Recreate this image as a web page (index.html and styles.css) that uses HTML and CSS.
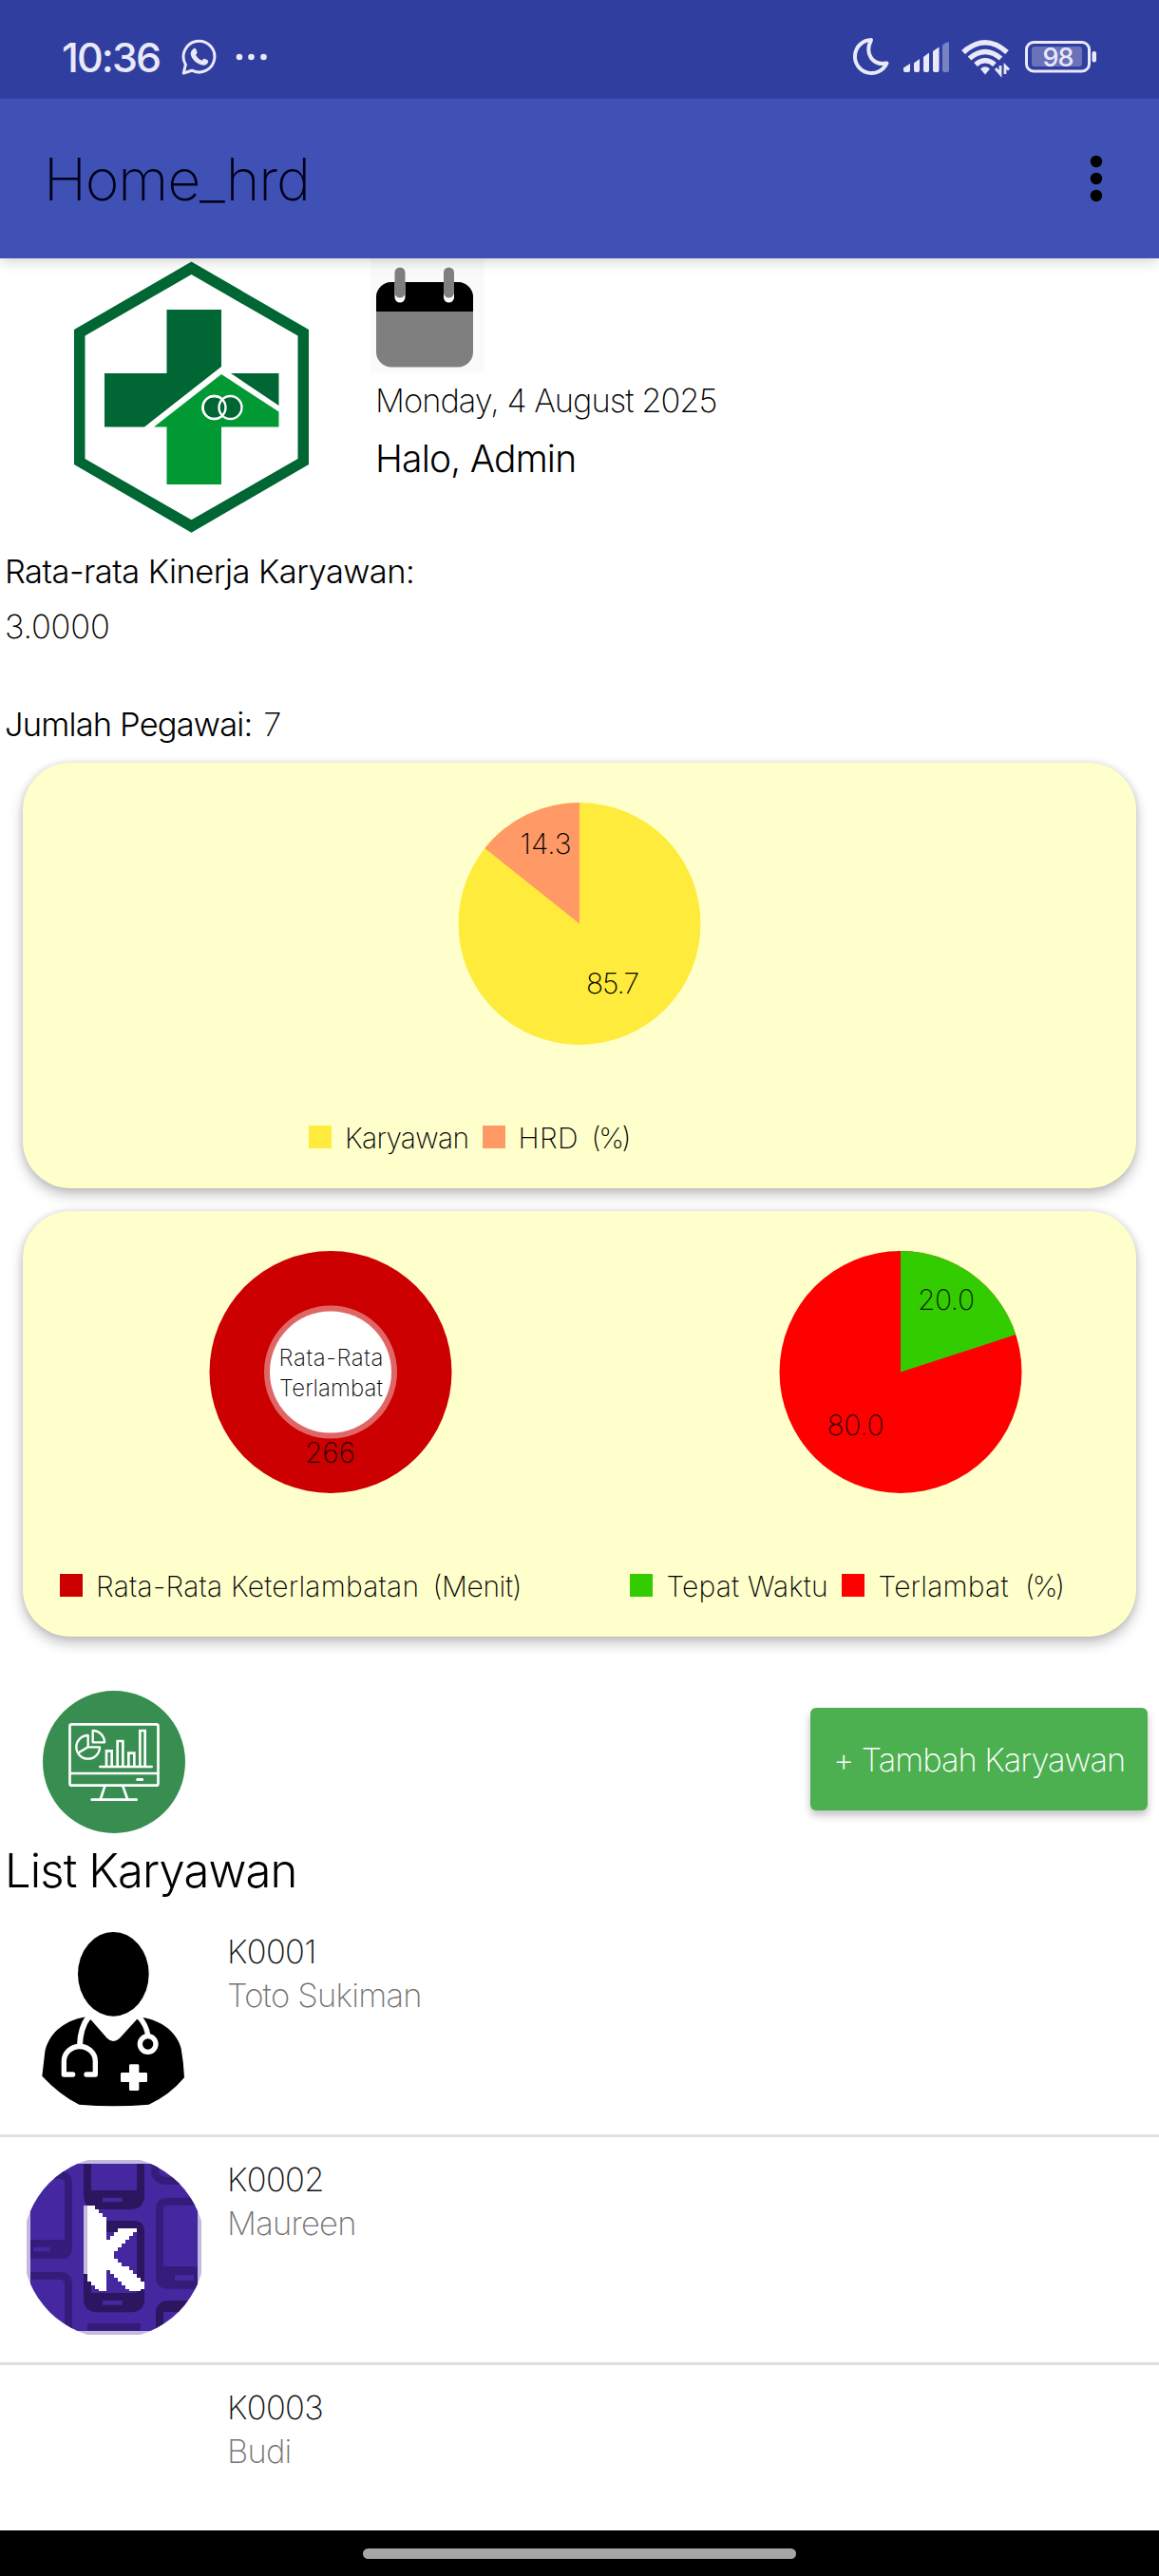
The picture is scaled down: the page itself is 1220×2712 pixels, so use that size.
FILE: index.html
```html
<!DOCTYPE html>
<html lang="id">
<head>
<meta charset="utf-8">
<title>Home_hrd</title>
<link rel="stylesheet" href="styles.css">
</head>
<body>
<div class="screen">
  <header class="status-bar">
    <div class="status-left">
      <span class="clock">10:36</span>
      <svg class="whatsapp" viewBox="0 0 38 38" fill="none">
        <path d="M2.2 36 L4.4 27 A16.4 16.4 0 1 1 11 33.2 Z" stroke="#e9e9fa" stroke-width="3" stroke-linejoin="round"/>
        <path d="M12.4 10.4c1.6-1.4 2.6-.6 3.2 1l.9 2.400c.3 1-.1 1.600-1.400 2.900 1.500 3 3.600 4.800 6.700 6.100 1.400-1.700 2-2.200 3-1.800l2.600 1.300c1 .5 1 1.500.3 2.900-1.300 2.300-3.900 3-6.800 2-5.600-1.700-10-6-11.100-10.800-.5-2.300.8-4.500 2.600-6z" fill="#e9e9fa"/>
      </svg>
      <svg class="more" viewBox="0 0 34 8" fill="#e9e9fa"><circle cx="4" cy="4" r="3.300"/><circle cx="16.500" cy="4" r="3.300"/><circle cx="29.500" cy="4" r="3.300"/></svg>
    </div>
    <svg class="status-right" viewBox="896 36 262 48" fill="none">
      <path d="M917 42 A17.500 17.500 0 1 0 933.500 66.500 C919 69.500 909.500 57 917 42 Z" stroke="#e9e9fa" stroke-width="4" stroke-linejoin="round"/>
      <g fill="#e9e9fa">
        <path d="M951 71.500 L958 67 V74 q0 2-2 2 h-3 q-2 0-2-2z"/>
        <path d="M962 66.500 L968 62 V74 q0 2-2 2 h-2 q-2 0-2-2z"/>
        <path d="M972 60 L978 55.500 V74 q0 2-2 2 h-2 q-2 0-2-2z"/>
        <path d="M982 54 L988.500 49.500 V74 q0 2-2 2 h-2.500 q-2 0-2-2z"/>
        <path opacity=".4" d="M992 48 Q995 44 999 44.500 V74 q0 2-2 2 h-3 q-2 0-2-2z"/>
        <path d="M1037 78.500 l-5-6 q5-4.500 10 0z"/>
      </g>
      <g stroke="#e9e9fa" stroke-width="5.500">
        <path d="M1014 55 Q1037 34.500 1060 55"/>
        <path d="M1020.500 61.500 Q1037 47.500 1053.500 61.500"/>
        <path d="M1027 68 Q1037 59.500 1047 68"/>
      </g>
      <path d="M1053 69v9l-5-6M1058 78v-8.500l4 4" stroke="#e9e9fa" stroke-width="2.800"/>
      <rect x="1080.500" y="44.500" width="66" height="30.500" rx="7.500" stroke="#e9e9fa" stroke-width="3"/>
      <rect x="1086" y="49" width="53" height="21" rx="3" fill="#6a72b9"/>
      <rect x="1149.500" y="54" width="4.500" height="11.500" rx="2" fill="#e9e9fa"/>
      <text x="1113.500" y="69.700" class="battery-level">98</text>
    </svg>
  </header>

  <div class="app-bar">
    <h1 class="app-title">Home_hrd</h1>
    <svg class="overflow" viewBox="0 0 14 50"><circle cx="7" cy="7" r="6.200"/><circle cx="7" cy="25" r="6.200"/><circle cx="7" cy="43" r="6.200"/></svg>
  </div>

  <main class="content">
    <section class="hero">
      <svg class="logo" viewBox="76 274 252 288">
        <path fill="#006633" fill-rule="evenodd" d="M201.500 275.500L325 347V489L201.500 560.700L78 489V347ZM201.500 289L89.500 353.500V483L201.500 547.300L313.500 483V353.500Z"/>
        <path fill="#006633" d="M175.500 326H233V386L152 449.500H110V393H175.500ZM243 393H293.500V427Z"/>
        <path fill="#009933" d="M233 394L293.500 433.500V449.500H233V510H175.500V449.500H162Z"/>
        <g fill="#006633" stroke="#fff" stroke-width="2.400"><circle cx="225.500" cy="429" r="12"/><circle cx="242.500" cy="429" r="12"/><circle cx="225.500" cy="429" r="12" fill="none"/></g>
      </svg>
      <div class="greeting">
        <svg class="calendar" viewBox="390 272 120 120">
          <path fill="#fafafa" d="M390 272h120v120h-120z"/>
          <rect x="396" y="297" width="102" height="89.500" rx="16" fill="#7f7f7f"/>
          <path d="M396 328V313a16 16 0 0 1 16-16h70a16 16 0 0 1 16 16v15z"/>
          <path d="M421 299v14M472.500 299v14" stroke="#fff" stroke-width="11" stroke-linecap="round"/>
          <path d="M421 287v21M472.500 287v21" stroke="#7f7f7f" stroke-width="11" stroke-linecap="round"/>
        </svg>
        <p class="date">Monday, 4 August 2025</p>
        <p class="hello">Halo, Admin</p>
      </div>
    </section>

    <section class="stats">
      <p class="stat-label">Rata-rata Kinerja Karyawan:</p>
      <p class="stat-value">3.0000</p>
      <p class="stat-row"><span class="stat-label employees">Jumlah Pegawai:</span><span class="stat-value">7</span></p>
    </section>

    <section class="card">
      <svg class="chart wide" viewBox="24 803 1172 448">
        <circle cx="610" cy="972.500" r="127.500" fill="#ffeb3b"/>
        <path fill="#ff9966" d="M610 972.500V845A127.500 127.500 0 0 0 510.300 893Z"/>
        <text x="547.500" y="899" textLength="54">14.3</text>
        <text x="617" y="1046" textLength="56">85.7</text>
        <path fill="#ffeb3b" d="M325 1185h24v24h-24z"/>
        <text x="363" y="1208.500" textLength="131">Karyawan</text>
        <path fill="#ff9966" d="M508 1185h24v24h-24z"/>
        <text x="545.500" y="1208.500" textLength="63">HRD</text>
        <text x="622.500" y="1208.500" textLength="42">(%)</text>
      </svg>
    </section>

    <section class="card">
      <svg class="chart" viewBox="24 1275 586 448">
        <circle cx="348" cy="1444.500" r="127.500" fill="#cc0000"/>
        <circle cx="348" cy="1444.500" r="70" fill="#e06666"/>
        <circle cx="348" cy="1444.500" r="64" fill="#fff"/>
        <text class="hole" x="293.500" y="1438.300" textLength="110">Rata-Rata</text>
        <text class="hole" x="294" y="1470.300" textLength="109">Terlambat</text>
        <text class="value" x="321" y="1540" textLength="53">266</text>
        <path fill="#cc0000" d="M63 1657h24v24h-24z"/>
        <text x="101" y="1681" textLength="340">Rata-Rata Keterlambatan</text>
        <text x="455.500" y="1681" textLength="94">(Menit)</text>
      </svg>
      <svg class="chart" viewBox="610 1275 586 448">
        <circle cx="948" cy="1444.500" r="127.500" fill="#ff0000"/>
        <path fill="#33cc00" d="M948 1444.500V1317A127.500 127.500 0 0 1 1069.300 1405.100Z"/>
        <text class="value" x="966" y="1379" textLength="60">20.0</text>
        <text class="value" x="870.500" y="1511" textLength="60">80.0</text>
        <path fill="#33cc00" d="M663 1657h24v24h-24z"/>
        <text x="701.500" y="1681" textLength="170">Tepat Waktu</text>
        <path fill="#ff0000" d="M886 1657h24v24h-24z"/>
        <text x="924.500" y="1681" textLength="137">Terlambat</text>
        <text x="1079" y="1681" textLength="42">(%)</text>
      </svg>
    </section>

    <section class="toolbar">
      <svg class="dashboard" viewBox="135 60 450 450" fill="none" stroke="#fff" stroke-width="8" stroke-linejoin="round" stroke-linecap="round">
        <circle cx="360" cy="285" r="225" fill="#388e51" stroke="none"/>
        <rect x="220.500" y="166" width="279" height="193" rx="6"/>
        <path d="M222 321H498M331 361L318 401M388 361L402 401M290 404H431"/>
        <path d="M434 340.500H449" stroke-width="9"/>
        <path d="M316 300H479"/>
        <path d="M336 299V250H353V299M371 299V219H388V299M406 299V257H424V299M442 299V186H458V299" stroke-linejoin="miter"/>
        <path d="M278 201A37 37 0 1 0 315 238H278ZM278 238L248 256M293 186A37 37 0 0 1 330 223H293Z" stroke-width="7"/>
      </svg>
      <button class="add">+ Tambah Karyawan</button>
    </section>
    <h2 class="list-title">List Karyawan</h2>

    <ul class="list">
      <li class="item">
        <svg class="avatar" viewBox="84 72 552 552">
          <ellipse cx="358" cy="205" rx="112" ry="133"/>
          <path d="M272 340C195 352 152 400 142 450L133 527Q190 588 250 617Q360 627 470 617Q535 588 582 532Q580 485 572 440C560 390 510 350 448 342L432 348L378 407Q358 427 338 407L288 350Z"/>
          <g fill="none" stroke="#fff" stroke-width="16">
            <path d="M281 338Q253 375 252 430" stroke-width="18"/>
            <path d="M230 522H202V480A49 46 0 0 1 301 480V522H273" stroke-linejoin="round" stroke-linecap="round"/>
            <path d="M439 340Q462 365 467 398"/>
            <circle cx="467" cy="426" r="25"/>
          </g>
          <path fill="#fff" d="M412 490h23q4 0 4 4v22h22q4 0 4 4v22q0 4-4 4h-22v23q0 4-4 4h-23q-4 0-4-4v-23h-23q-4 0-4-4v-22q0-4 4-4h23v-22q0-4 4-4z"/>
        </svg>
        <div class="info"><p class="code">K0001</p><p class="name">Toto Sukiman</p></div>
      </li>
      <li class="item">
        <svg class="avatar" viewBox="84 75 552 552">
          <clipPath id="round"><circle cx="360" cy="351" r="288"/></clipPath>
          <g clip-path="url(#round)">
            <path fill="#c4b9df" d="M84 75h552v552H84z"/>
            <path fill="#45279f" d="M96 87h528v528H96z"/>
            <g fill="none" stroke="#351c7a" stroke-width="24">
              <path d="M96 122H190Q216 122 216 150V352Q216 375 190 375"/>
              <path d="M96 441H190Q216 441 216 470V615"/>
              <path d="M624 206H530Q504 206 504 232V442Q504 470 530 470H624" />
              <path d="M490 87V120Q500 141 530 141H590" />
            </g>
            <path fill="#351c7a" d="M96 327H210V387H96zM510 411H624V480H525z"/>
            <path fill="#2c165f" d="M264 87H288V171H432V87H456V190Q452 231 414 231H310Q268 231 264 190ZM264 300Q264 267 300 267H420Q456 267 456 300V520Q452 556 414 556H310Q268 556 264 520ZM492 615V550Q500 519 530 519H624V555H516V615Z"/>
            <path fill="#45279f" d="M288 303H432V495H288zM324 194h62v14h-62zM324 519h62v14h-62zM106 350h52v14h-52zM552 438h60v18h-60z"/>
            <path fill="#351c7a" d="M276 591H444V615H276z"/>
            <path fill="#fff" shape-rendering="crispEdges" d="M264 219H300V231H312V243H324V255H336V327H348V315H360V303H372V291H432V303H420V315H408V327H396V339H384V351H372V363H360V387H372V399H384V411H408V423H420V435H432V447H444V459H456V483H444V489H408V483H396V471H384V459H372V447H360V435H348V423H336V489H312V483H300V471H288V459H276V435H264Z"/>
            <path fill="#c4b9df" d="M264 219H276V435H264z"/>
          </g>
        </svg>
        <div class="info"><p class="code">K0002</p><p class="name">Maureen</p></div>
      </li>
      <li class="item">
        <div class="avatar"></div>
        <div class="info"><p class="code">K0003</p><p class="name">Budi</p></div>
      </li>
    </ul>
  </main>
  <footer class="nav-bar"><span class="handle"></span></footer>
</div>
</body>
</html>
```
FILE: styles.css
```css
* { box-sizing: border-box; margin: 0; padding: 0; }
body { width: 1220px; background: #fff; color: #000; font-family: Inter, "Open Sans", sans-serif; font-weight: 200; }
svg { display: block; }
p, h1, h2, span, button { white-space: nowrap; }
.screen { display: flex; flex-direction: column; width: 1220px; height: 2712px; overflow: hidden; }

.status-bar { flex: none; position: relative; z-index: 2; display: flex; justify-content: space-between; height: 104px; padding: 0 62px 0 65px; background: #303f9f; color: #e9e9fa; }
.status-left { display: flex; align-items: flex-start; }
.clock { width: 126px; margin-top: 30px; font-size: 43px; line-height: 60px; font-weight: 500; letter-spacing: -1.900px; }
.whatsapp { width: 38px; height: 38px; margin-top: 41px; }
.more { width: 34px; height: 8px; margin: 56px 0 0 19px; }
.status-right { width: 262px; height: 48px; margin-top: 36px; }
.battery-level { font-size: 27px; font-weight: 500; letter-spacing: -1px; text-anchor: middle; fill: #e9e9fa; }

.app-bar { flex: none; position: relative; z-index: 1; display: flex; justify-content: space-between; align-items: flex-start; height: 168px; padding: 0 59px 0 46px; background: #3f51b5; box-shadow: 0 2px 14px rgba(0, 0, 0, .2); }
.app-title { margin-top: 45px; font-size: 61px; line-height: 80px; font-weight: 200; color: #000019; letter-spacing: -1.200px; }
.overflow { width: 14px; height: 50px; margin-top: 59px; }

.content { flex: 1; min-height: 0; overflow: hidden; }
.hero { display: flex; gap: 62px; height: 290px; padding-left: 76px; }
.logo { width: 252px; height: 288px; margin-top: 2px; }
.greeting { display: flex; flex-direction: column; }
.calendar { width: 120px; height: 120px; }
.date { margin: 8px 0 0 5px; font-size: 34.500px; line-height: 44px; letter-spacing: -1px; }
.hello { margin: 16px 0 0 5px; font-size: 39px; line-height: 46px; font-weight: 350; letter-spacing: -.8px; }

.stats { height: 241px; padding: 18px 0 0 5px; font-size: 34.500px; line-height: 44px; }
.stat-label { font-weight: 350; letter-spacing: -.55px; }
.employees { letter-spacing: -.85px; }
.stat-value { margin-top: 14px; letter-spacing: -.2px; }
.stat-row { display: flex; gap: 12px; margin-top: 59px; }
.stat-row .stat-value { margin: 0; }

.card { display: flex; height: 448px; margin: 0 24px 24px; border-radius: 50px; background: #ffffcc; box-shadow: 0 7px 14px rgba(0, 0, 0, .24), 0 0 7px rgba(0, 0, 0, .12); }
.chart { width: 586px; height: 448px; }
.chart.wide { width: 1172px; }
.chart text { font-size: 30px; font-weight: 200; fill: #000; }
.chart .hole { font-size: 24px; }
.chart .value { fill-opacity: .85; }

.toolbar { display: flex; justify-content: space-between; align-items: flex-start; height: 183px; padding: 33px 12px 0 45px; }
.dashboard { width: 150px; height: 150px; }
.add { width: 355px; height: 108px; margin-top: 18px; padding-top: 1px; border: 0; border-radius: 6px; background: #4caf50; color: #fff; box-shadow: 0 5px 9px rgba(0, 0, 0, .25); font: 200 34.500px/107px Inter, "Open Sans", sans-serif; letter-spacing: -1.050px; }
.list-title { padding: 10px 0 0 5px; font-size: 49px; line-height: 60px; font-weight: 350; letter-spacing: -.9px; }

.list { margin-top: 10px; list-style: none; }
.item { display: flex; gap: 27px; height: 240px; padding: 24px 0 0 28px; border-bottom: 3px solid #e0e0e0; }
.avatar { width: 184px; height: 184px; }
.info { font-size: 34.500px; line-height: 46px; }
.code { margin-top: -2px; color: #111; letter-spacing: -.7px; }
.name { color: #757575; letter-spacing: -.75px; }

.nav-bar { flex: none; display: flex; justify-content: center; height: 48px; padding-top: 19px; background: #000; }
.handle { width: 456px; height: 11px; border-radius: 6px; background: #a6a6a6; }
```
